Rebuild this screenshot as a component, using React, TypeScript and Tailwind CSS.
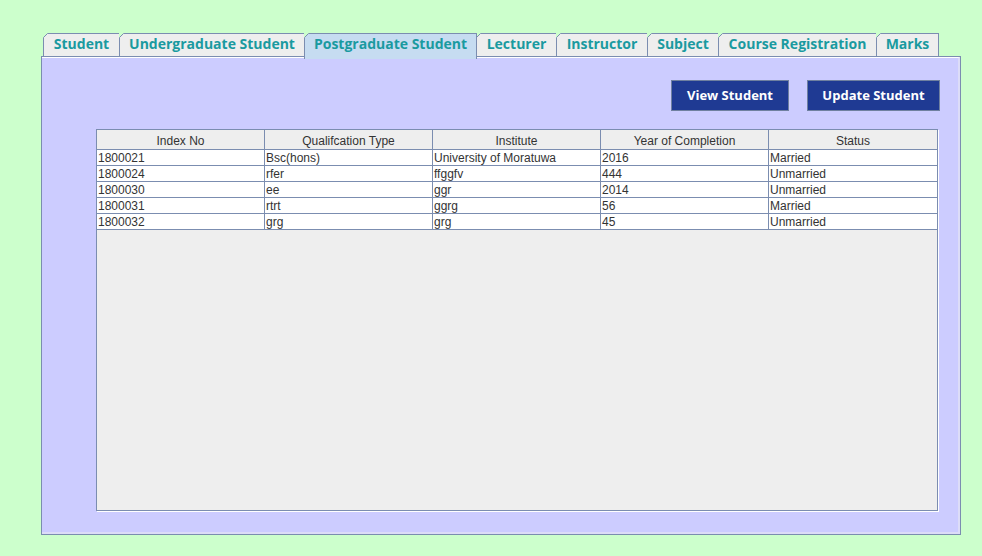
import React from "react";

const tabs = [
  { label: "Student", w: "w-[77px]" },
  { label: "Undergraduate Student", w: "w-[186px]" },
  { label: "Postgraduate Student", w: "w-[173px]", selected: true },
  { label: "Lecturer", w: "w-[81px]" },
  { label: "Instructor", w: "w-[92px]" },
  { label: "Subject", w: "w-[72px]" },
  { label: "Course Registration", w: "w-[159px]" },
  { label: "Marks", w: "w-[63px]" },
];

const headers = ["Index No", "Qualifcation Type", "Institute", "Year of Completion", "Status"];

const rows = [
  ["1800021", "Bsc(hons)", "University of Moratuwa", "2016", "Married"],
  ["1800024", "rfer", "ffggfv", "444", "Unmarried"],
  ["1800030", "ee", "ggr", "2014", "Unmarried"],
  ["1800031", "rtrt", "ggrg", "56", "Married"],
  ["1800032", "grg", "grg", "45", "Unmarried"],
];

function Corner() {
  return (
    <svg
      className="absolute left-[-1px] top-[-1px]"
      width="5"
      height="5"
      viewBox="0 0 5 5"
    >
      <polygon points="0,0 5,0 0,5" fill="#ccffcc" />
      <line x1="0.5" y1="4.5" x2="4.5" y2="0.5" stroke="#7b8db0" strokeWidth="1" />
    </svg>
  );
}

export default function App() {
  return (
    <div className="min-h-screen w-full bg-[#ccffcc] pt-[33px] pl-[41px]">
      <div className="relative z-10 flex h-[23px] items-start pl-[2px]">
        {tabs.map((t, i) => (
          <div
            key={t.label}
            className={
              "relative box-border border-l border-r border-t border-[#7b8db0] " +
              t.w +
              (i > 0 ? " -ml-px" : "") +
              (t.selected
                ? " z-10 h-[26px] bg-[#c6dcf1]"
                : " h-[23px] bg-[#eeeeee]")
            }
          >
            <Corner />
            <div className="h-[20px] whitespace-nowrap text-center font-['Open_Sans',sans-serif] text-[14px] font-bold leading-[20px] text-[#1a9aa0]">
              {t.label}
            </div>
          </div>
        ))}
      </div>
      <div className="box-border h-[479px] w-[920px] border border-[#7b8db0] bg-[#ccccff]">
        <div className="box-border flex h-full flex-col border-b-2 border-r-2 border-t border-b-[#dcdcf8] border-r-[#dcdcf8] border-t-white pl-[54px] pr-[18px] pt-[22px]">
          <div className="flex justify-end gap-[18px]">
            <button className="box-border flex h-[31px] w-[118px] items-center justify-center border border-[#6f80a0] bg-[#1f3a93] font-['Open_Sans',sans-serif] text-[13px] font-bold text-white">
              View Student
            </button>
            <button className="box-border flex h-[31px] w-[133px] items-center justify-center border border-[#6f80a0] bg-[#1f3a93] font-['Open_Sans',sans-serif] text-[13px] font-bold text-white">
              Update Student
            </button>
          </div>
          <div className="mr-[2px] mt-[18px] box-border h-[382px] border border-[#7b8db0] bg-[#eeeeee] font-['Liberation_Sans',Arial,sans-serif] text-[12px] text-[#333333] shadow-[1px_1px_0_#ffffff]">
            <div className="grid grid-cols-5 border-b border-[#7b8db0] bg-[#eeeeee]">
              {headers.map((h, i) => (
                <div
                  key={h}
                  className={
                    "box-border h-[19px] pt-[3px] text-center leading-[16px] " +
                    (i < 4 ? "border-r border-[#7b8db0]" : "")
                  }
                >
                  {h}
                </div>
              ))}
            </div>
            {rows.map((r, ri) => (
              <div key={ri} className="grid grid-cols-5 border-b border-[#7b8db0] bg-white">
                {r.map((c, ci) => (
                  <div
                    key={ci}
                    className={
                      "box-border h-[15px] whitespace-nowrap pl-px pt-px leading-[14px] " +
                      (ci < 4 ? "border-r border-[#7b8db0]" : "")
                    }
                  >
                    {c}
                  </div>
                ))}
              </div>
            ))}
          </div>
        </div>
      </div>
    </div>
  );
}
